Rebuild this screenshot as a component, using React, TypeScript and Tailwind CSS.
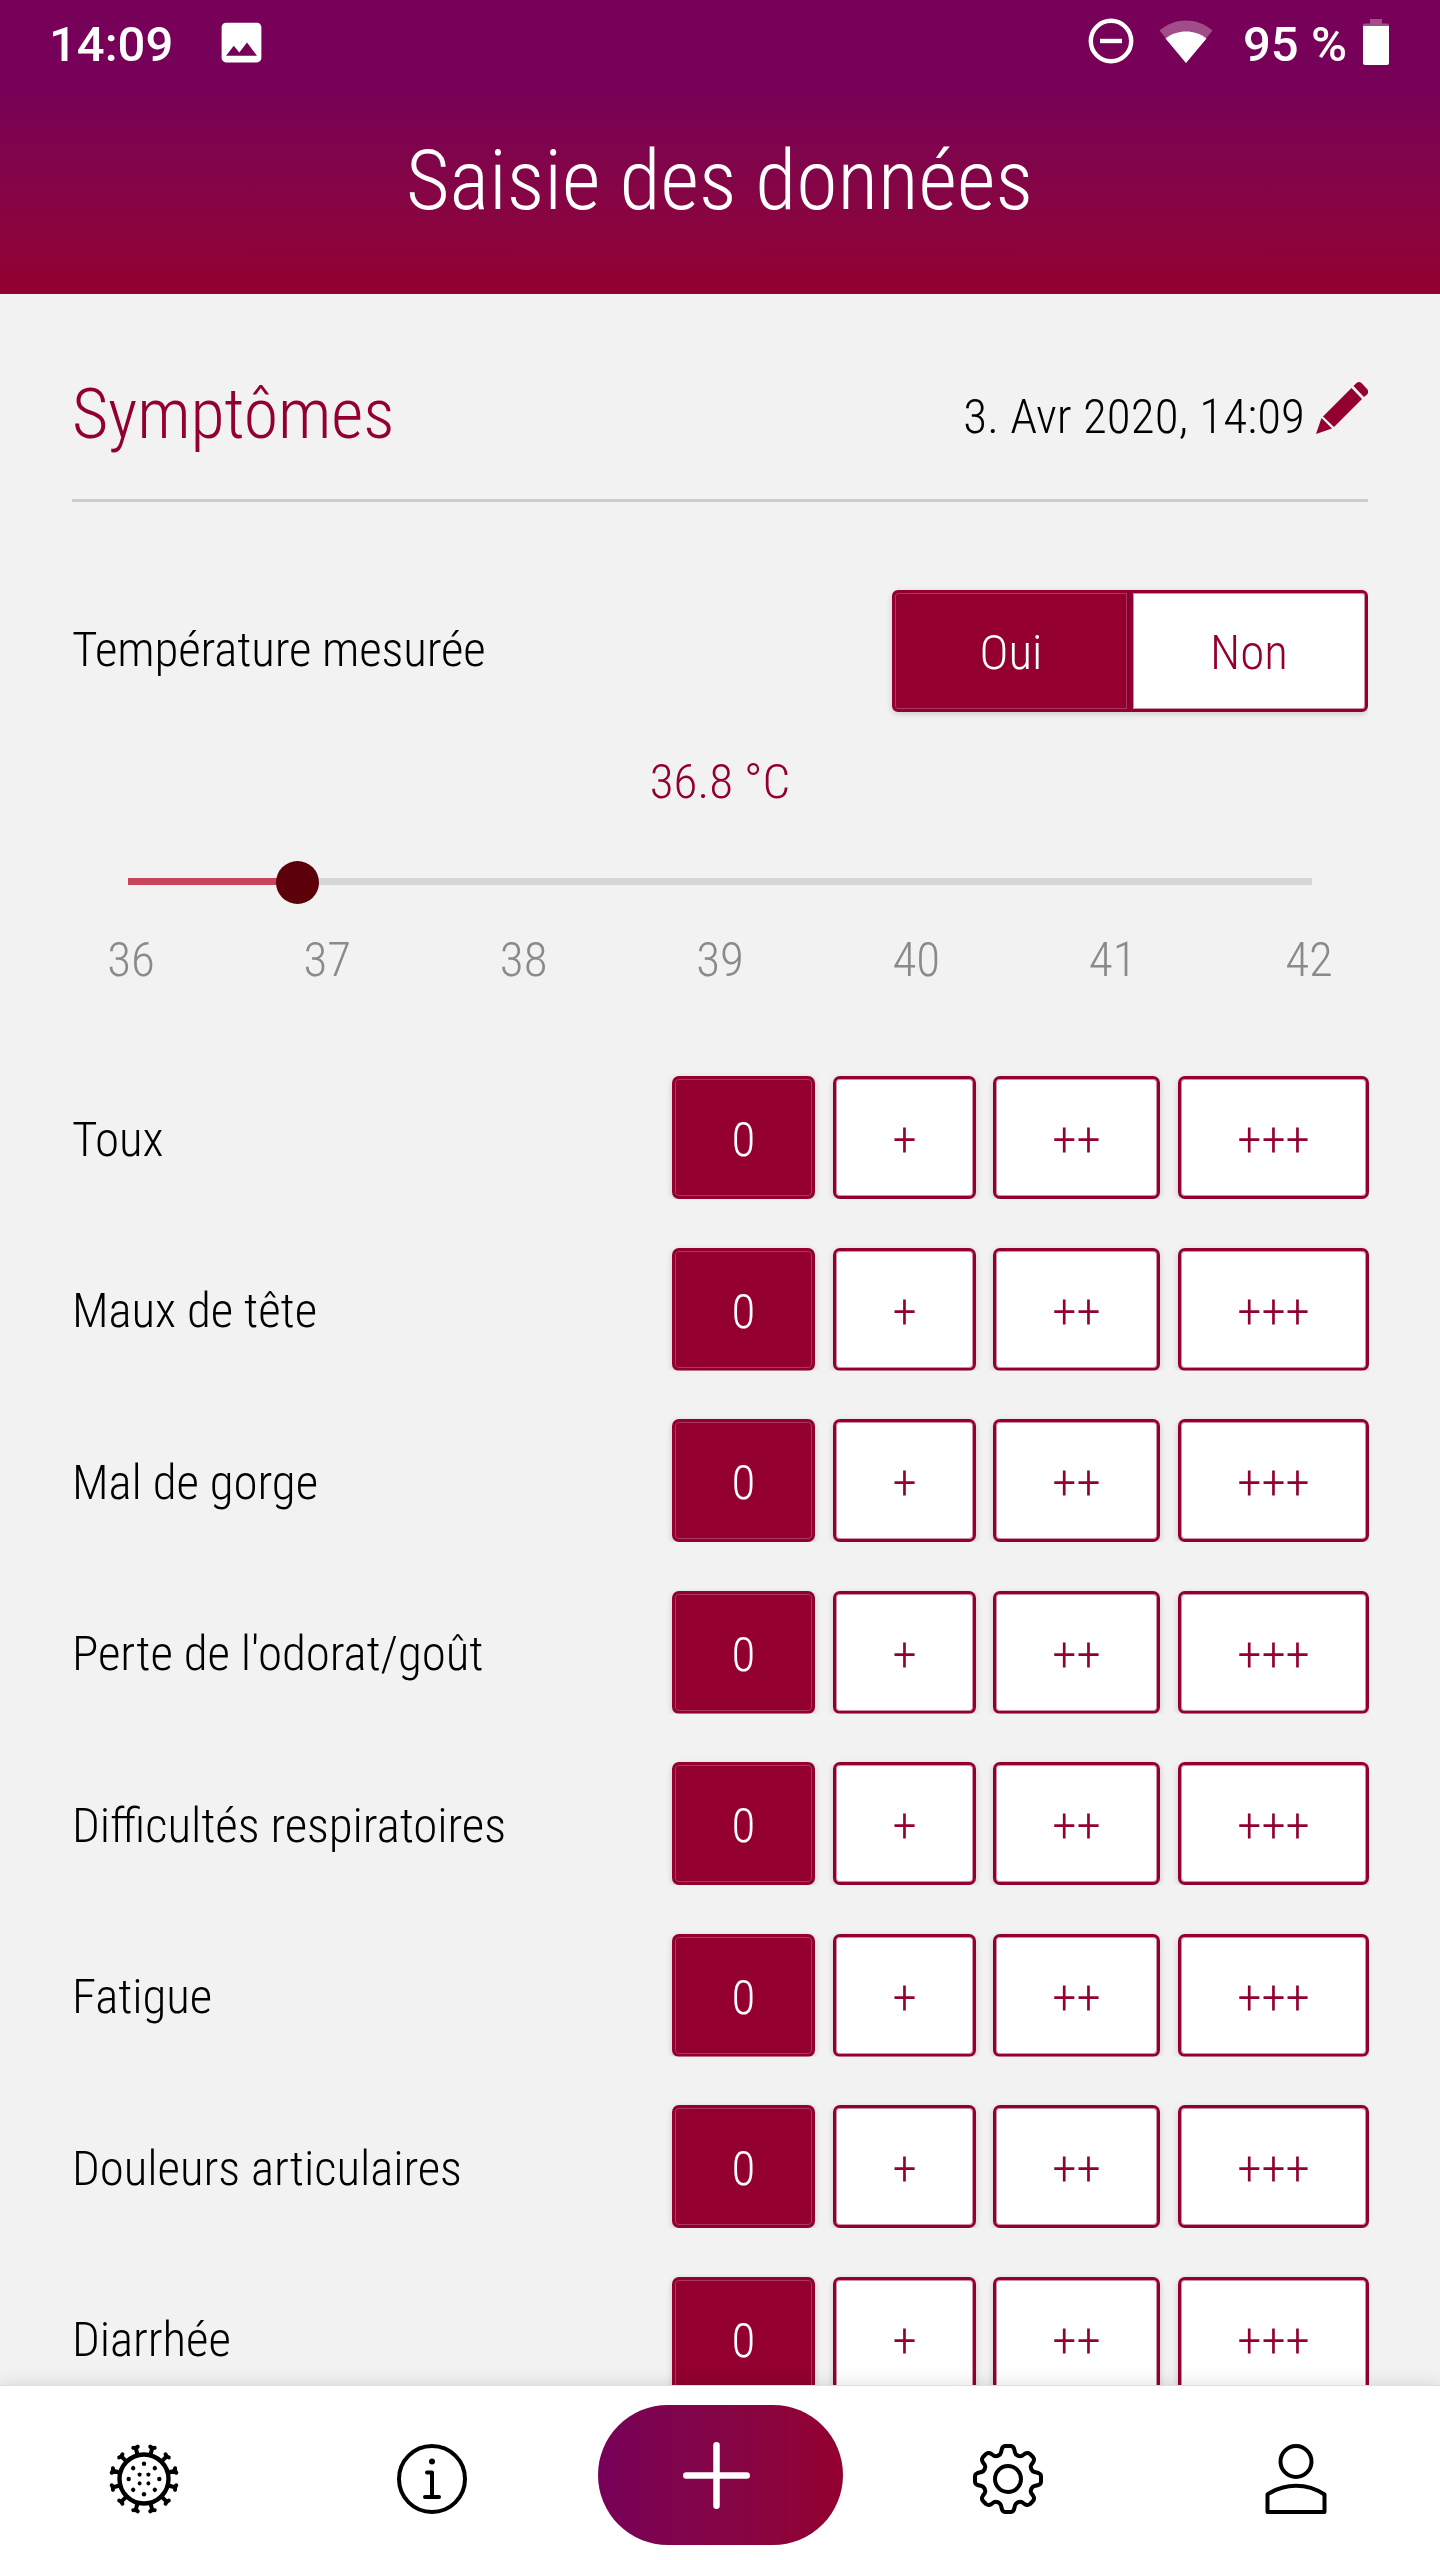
import type { ReactNode } from "react";

const symptoms = [
  "Toux",
  "Maux de tête",
  "Mal de gorge",
  "Perte de l'odorat/goût",
  "Difficultés respiratoires",
  "Fatigue",
  "Douleurs articulaires",
  "Diarrhée",
];

const levels = [
  { label: "0", width: "w-[143px]" },
  { label: "+", width: "w-[143px]" },
  { label: "++", width: "-ml-px w-[167px]" },
  { label: "+++", width: "w-[191px]" },
];

const degrees = [36, 37, 38, 39, 40, 41, 42];

const filled =
  "bg-[#93002f] text-white shadow-[inset_0_0_0_1px_rgba(255,255,255,0.22),0_2px_6px_rgba(0,0,0,0.16)]";
const outlined =
  "bg-white text-[#93002f] shadow-[inset_0_0_0_1px_#cf8fa5,0_2px_6px_rgba(0,0,0,0.16)]";

function StatusBar() {
  return (
    <div className="flex h-[88px] items-center font-['Roboto'] text-[49px] leading-none font-medium text-white font-stretch-[100%]">
      <span className="ml-[49px] w-[166px]">14:09</span>
      <svg className="-mt-1 size-[53px]" viewBox="0 0 24 24" fill="currentColor">
        <path d="M21 19V5c0-1.1-.9-2-2-2H5c-1.1 0-2 .9-2 2v14c0 1.1.9 2 2 2h14c1.1 0 2-.9 2-2zM8.500 13.500l2.500 3.010L14.500 12l4.500 6H5l3.500-4.500z" />
      </svg>
      <svg className="-mt-1.5 ml-auto size-[46px]" viewBox="0 0 46 46" fill="none" stroke="currentColor" strokeWidth="4.400">
        <circle cx="23" cy="23" r="20.200" />
        <path d="M12 23h22" />
      </svg>
      <svg className="-mt-1.5 ml-[25px] h-[43px] w-[54px]" viewBox="0 0 54 43" fill="currentColor">
        <path d="M27 43 .5 10.500C9 3.500 17.500.500 27 .500s18 3 26.500 10z" opacity=".3" />
        <path d="M27 43 6.500 18.500C13 13.500 19.500 11.500 27 11.500s14 2 20.500 7z" />
      </svg>
      <span className="ml-[30px] w-[120px] whitespace-nowrap">95 %</span>
      <svg className="-mt-1 mr-[51px] h-[46px] w-[26px]" viewBox="0 0 26 46" fill="currentColor">
        <path d="M0 7V6q0-1.500 1.500-1.500H7V0h12v4.500h5.500Q26 4.500 26 6v1z" opacity=".3" />
        <path d="M0 7h26v37q0 2-2 2H2q-2 0-2-2z" />
      </svg>
    </div>
  );
}

function Pencil() {
  return (
    <svg className="h-[52px] w-[52px]" viewBox="0 0 52 52" fill="#93002f">
      <path d="M0 52 5.500 36 16 46.500z" />
      <path d="M7 34.500 35.500 6 46 17 18 45z" />
      <path d="M37.500 4 40.500 1q2.500-2 5 0l6 6.500q1.500 2.500-.5 5L48 15z" />
    </svg>
  );
}

function Toggle() {
  return (
    <div className="flex h-[122px] w-[476px] text-center [clip-path:inset(-8px_0px_-12px_-8px)]">
      <div className={`w-[238px] rounded-l-[6px] border-3 border-[#93002f] pt-[2px] leading-[116px] ${filled}`}>Oui</div>
      <div className={`w-[238px] rounded-r-[6px] border-3 border-[#93002f] pt-[2px] leading-[116px] ${outlined}`}>Non</div>
    </div>
  );
}

function Slider() {
  return (
    <div className="relative mx-[56px] h-[7px] bg-[#d5d5d5]">
      <div className="h-full w-[170px] bg-[#c9435a]" />
      <div className="absolute -top-[17px] left-[148px] size-[43px] rounded-full bg-[#5c000a]" />
    </div>
  );
}

function SymptomRow({ name }: { name: string }) {
  return (
    <div className="mb-[48.500px] flex h-[123px] shrink-0 items-center justify-between">
      <span className="pt-[4px] tracking-[-0.09px] whitespace-nowrap [font-feature-settings:'liga']">{name}</span>
      <div className="-mr-px flex h-[123px] gap-[18px] text-center [clip-path:inset(-8px_0px_0px_-8px)]">
        {levels.map((level, i) => (
          <div
            key={level.label}
            className={`rounded-[7px] border-3 border-[#93002f] pt-[2px] leading-[117px] ${level.width} ${i === 0 ? filled : outlined}`}
          >
            {level.label}
          </div>
        ))}
      </div>
    </div>
  );
}

function Icon({ children }: { children: ReactNode }) {
  return (
    <svg
      className="size-[72px]"
      viewBox="-36 -36 72 72"
      fill="none"
      stroke="#000"
      strokeWidth="4"
      strokeLinecap="round"
      strokeLinejoin="round"
    >
      {children}
    </svg>
  );
}

const spikes = [15, 45, 75, 105, 135, 165, 195, 225, 255, 285, 315, 345];
const outerDots = [0, 45, 90, 135, 180, 225, 270, 315];
const innerDots = [45, 135, 225, 315];

function VirusIcon() {
  return (
    <Icon>
      <circle r="24.500" strokeWidth="4.400" />
      {spikes.map((a) => (
        <path key={a} d="M0-26v-6M-2.300-32.800Q0-31.500 2.300-32.800" transform={`rotate(${a})`} />
      ))}
      <g fill="#000" stroke="none">
        {outerDots.map((a) => (
          <circle key={a} cy="-15.300" r="2.200" transform={`rotate(${a})`} />
        ))}
        {innerDots.map((a) => (
          <circle key={a} cy="-6.200" r="2" transform={`rotate(${a})`} />
        ))}
      </g>
    </Icon>
  );
}

function InfoIcon() {
  return (
    <Icon>
      <circle r="33" />
      <circle cy="-17.500" r="3" fill="#000" stroke="none" />
      <path d="M-5-6.500H0V18M-7 18H7" />
    </Icon>
  );
}

function GearIcon() {
  return (
    <Icon>
      <circle r="13" />
      <path d="M-2.500-33H2.500Q5-33 6-30.500L7-26.500Q7.500-24.500 9.500-23.500L11-23Q12.500-22.300 14.500-23.500L16.500-25Q19.500-27 22-25L25-22Q27-19.500 25-16.500L23.500-14.500Q22.300-12.500 23-11L23.500-9.500Q24.500-7.500 26.500-7L30.500-6Q33-5 33-2.500V2.500Q33 5 30.500 6L26.500 7Q24.500 7.500 23.500 9.500L23 11Q22.300 12.500 23.500 14.500L25 16.500Q27 19.500 25 22L22 25Q19.500 27 16.500 25L14.500 23.500Q12.500 22.300 11 23L9.500 23.500Q7.500 24.500 7 26.500L6 30.500Q5 33 2.500 33H-2.500Q-5 33-6 30.500L-7 26.500Q-7.500 24.500-9.500 23.500L-11 23Q-12.500 22.300-14.500 23.500L-16.500 25Q-19.500 27-22 25L-25 22Q-27 19.500-25 16.500L-23.500 14.500Q-22.300 12.500-23 11L-23.500 9.500Q-24.500 7.500-26.500 7L-30.500 6Q-33 5-33 2.500V-2.500Q-33-5-30.500-6L-26.500-7Q-24.500-7.500-23.500-9.500L-23-11Q-22.300-12.500-23.500-14.500L-25-16.500Q-27-19.500-25-22L-22-25Q-19.500-27-16.500-25L-14.500-23.500Q-12.500-22.300-11-23L-9.500-23.500Q-7.500-24.500-7-26.500L-6-30.500Q-5-33-2.500-33Z" />
    </Icon>
  );
}

function PersonIcon() {
  return (
    <Icon>
      <circle cy="-17.500" r="15.500" />
      <path d="M-28.500 15.500Q-15.500 6.700 0 6.700T28.500 15.500V33H-28.500Z" />
    </Icon>
  );
}

function NavBar() {
  return (
    <nav className="relative grid h-[175px] shrink-0 grid-cols-5 items-start justify-items-center border-t border-[#dedede] bg-white shadow-[0_0_18px_rgba(0,0,0,0.13)]">
      <div className="pt-[57px]"><VirusIcon /></div>
      <div className="pt-[57px]"><InfoIcon /></div>
      <div className="mt-[19px] flex h-[140px] w-[245px] items-center justify-center rounded-full bg-linear-to-r from-[#770058] to-[#93002f]">
        <svg className="mr-[8px] size-[67px]" viewBox="0 0 67 67" fill="none" stroke="#fff" strokeWidth="6.500" strokeLinecap="round">
          <path d="M33.500 3.300v60.400M3.300 33.500h60.400" />
        </svg>
      </div>
      <div className="pt-[57px]"><GearIcon /></div>
      <div className="pt-[57px]"><PersonIcon /></div>
    </nav>
  );
}

export default function App() {
  return (
    <div className="flex h-[2560px] w-[1440px] flex-col overflow-hidden bg-[#f2f2f2] font-['Roboto_Condensed','Roboto',sans-serif] text-[49px] leading-[60px] font-light font-stretch-[75%] text-black">
      <header className="h-[294px] shrink-0 bg-linear-to-b from-[#770058] from-[29%] to-[#93002f]">
        <StatusBar />
        <h1 className="pr-px text-center text-[84px] leading-[186px] text-white">Saisie des données</h1>
      </header>

      <main className="flex min-h-0 flex-1 flex-col overflow-hidden px-[72px]">
        <div className="flex h-[208px] shrink-0 items-center justify-between border-b-3 border-[#cdcdcd] pt-[35px]">
          <h2 className="text-[70px] leading-[82px] tracking-[-0.15px] text-[#93002f]">Symptômes</h2>
          <div className="flex items-center gap-[11px]">
            <span className="pt-[6px] tracking-[0.1px]">3. Avr 2020, 14:09</span>
            <div className="-mt-[12px]"><Pencil /></div>
          </div>
        </div>

        <div className="mt-[88px] flex h-[122px] shrink-0 items-center justify-between">
          <span className="-mt-[3px] tracking-[-0.15px]">Température mesurée</span>
          <Toggle />
        </div>

        <div className="mt-[40px] shrink-0 text-center text-[#93002f]">36.8 °C</div>
        <div className="mt-[66px] shrink-0"><Slider /></div>
        <div className="mt-[45px] mb-[86px] flex shrink-0 justify-between px-[29px] text-[#8a8a8a]">
          {degrees.map((d) => (
            <span key={d} className="w-[60px] text-center">{d}</span>
          ))}
        </div>

        {symptoms.map((name) => (
          <SymptomRow key={name} name={name} />
        ))}
      </main>

      <NavBar />
    </div>
  );
}
